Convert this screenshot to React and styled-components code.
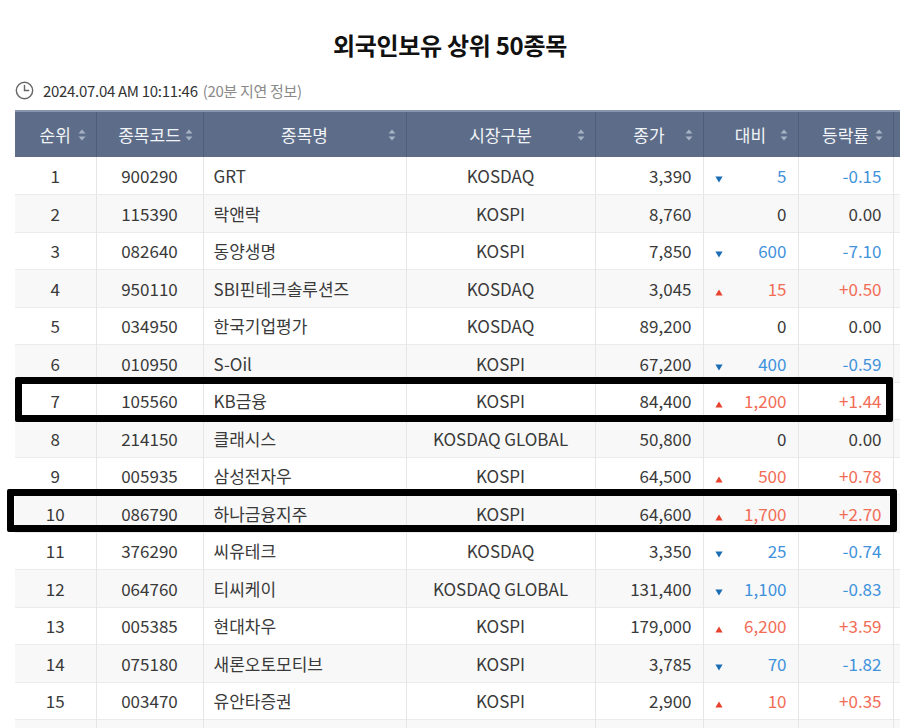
import * as React from "react"
import styled, { createGlobalStyle } from "styled-components"

const GlobalStyle = createGlobalStyle`
  html, body {
    margin: 0;
    padding: 0;
    background: #fff;
  }
  body {
    font-family: "Noto Sans CJK KR", "Noto Sans", sans-serif;
    color: #333;
  }
`

const columns = [
  { label: "순위", width: 81 },
  { label: "종목코드", width: 107 },
  { label: "종목명", width: 203 },
  { label: "시장구분", width: 189 },
  { label: "종가", width: 108 },
  { label: "대비", width: 95 },
  { label: "등락률", width: 95 },
  { label: "", width: 100, blank: true },
]

const rows = [
  [1, "900290", "GRT", "KOSDAQ", "3,390", "down", "5", "-0.15"],
  [2, "115390", "락앤락", "KOSPI", "8,760", null, "0", "0.00"],
  [3, "082640", "동양생명", "KOSPI", "7,850", "down", "600", "-7.10"],
  [4, "950110", "SBI핀테크솔루션즈", "KOSDAQ", "3,045", "up", "15", "+0.50"],
  [5, "034950", "한국기업평가", "KOSDAQ", "89,200", null, "0", "0.00"],
  [6, "010950", "S-Oil", "KOSPI", "67,200", "down", "400", "-0.59"],
  [7, "105560", "KB금융", "KOSPI", "84,400", "up", "1,200", "+1.44"],
  [8, "214150", "클래시스", "KOSDAQ GLOBAL", "50,800", null, "0", "0.00"],
  [9, "005935", "삼성전자우", "KOSPI", "64,500", "up", "500", "+0.78"],
  [10, "086790", "하나금융지주", "KOSPI", "64,600", "up", "1,700", "+2.70"],
  [11, "376290", "씨유테크", "KOSDAQ", "3,350", "down", "25", "-0.74"],
  [12, "064760", "티씨케이", "KOSDAQ GLOBAL", "131,400", "down", "1,100", "-0.83"],
  [13, "005385", "현대차우", "KOSPI", "179,000", "up", "6,200", "+3.59"],
  [14, "075180", "새론오토모티브", "KOSPI", "3,785", "down", "70", "-1.82"],
  [15, "003470", "유안타증권", "KOSPI", "2,900", "up", "10", "+0.35"],
]

// rows picked out with a thick marker in the picture
const marks = [
  { top: 377, left: 15, width: 878, height: 45 },
  { top: 489, left: 7, width: 890, height: 43 },
]

const Page = styled.div`
  position: relative;
  width: 900px;
  height: 728px;
  overflow: hidden;
`

const Title = styled.h1`
  margin: 0;
  padding-top: 28px;
  line-height: 34px;
  font-size: 24px;
  font-weight: 700;
  color: #111;
  text-align: center;
  letter-spacing: -0.3px;
`

const Meta = styled.div`
  display: flex;
  align-items: center;
  gap: 9px;
  margin-top: 18px;
  padding-left: 15px;
  height: 20px;
  font-size: 15px;
  letter-spacing: -0.3px;
  color: #333;
`

const Delay = styled.span`
  color: #8a8a8a;
  margin-left: -4px;
`

const TableWrap = styled.div`
  margin: 10px 0 0 15px;
  width: 885px;
  overflow: hidden;
`

const Table = styled.table`
  table-layout: fixed;
  border-collapse: collapse;
  width: 978px;
  font-size: 17px;
`

const HeadRow = styled.tr`
  height: 46px;
  background: #5d6d89;
  border-top: 2px solid #8796ae;
`

const Th = styled.th`
  position: relative;
  padding: 0;
  font-weight: 400;
  color: #f2f4f8;
  text-align: center;
  border-left: 1px solid #4f5e79;
  &:first-child {
    border-left: 0;
  }
`

const SortIcon = styled.svg`
  position: absolute;
  right: 10px;
  top: 50%;
  margin-top: -6px;
`

const Row = styled.tr`
  height: 37.5px;
  background: ${(p) => (p.$even ? "#f8f8f8" : "#fff")};
  border-bottom: 1px solid #ebebeb;
`

const Td = styled.td`
  padding: 0 ${(p) => (p.$align === "right" ? "11px" : p.$align === "left" ? "10px" : "0")};
  text-align: ${(p) => p.$align || "center"};
  color: ${(p) => (p.$tone === "up" ? "#f26c56" : p.$tone === "down" ? "#3f92dc" : "#3a3a3a")};
  border-left: 1px solid #e6e6e6;
  white-space: nowrap;
  line-height: 1;
  &:first-child {
    border-left: 0;
  }
`

const Change = styled.div`
  display: flex;
  align-items: center;
  justify-content: space-between;
`

const Mark = styled.div`
  position: absolute;
  box-sizing: border-box;
  border: 7px solid #000;
  border-radius: 2px;
  pointer-events: none;
`

const Clock = () => (
  <svg width="19" height="19" viewBox="0 0 20 20" fill="none" stroke="#666" strokeWidth="1.5">
    <circle cx="10" cy="10" r="8.6" />
    <path d="M10 4.6V10h4.4" strokeLinecap="round" />
  </svg>
)

const Sort = () => (
  <SortIcon width="8" height="12" viewBox="0 0 8 12">
    <path d="M4 0.5L7.5 4.6H0.5Z" fill="#a7b2c5" />
    <path d="M4 11.5L7.5 7.4H0.5Z" fill="#a7b2c5" />
  </SortIcon>
)

const Arrow = ({ dir }) =>
  dir === "up" ? (
    <svg width="8" height="7" viewBox="0 0 8 7">
      <path d="M4 0.5L7.6 6.5H0.4Z" fill="#e8412e" />
    </svg>
  ) : (
    <svg width="8" height="7" viewBox="0 0 8 7">
      <path d="M4 6.5L7.6 0.5H0.4Z" fill="#1a6db5" />
    </svg>
  )

const App = () => (
  <Page>
    <GlobalStyle />
    <Title>외국인보유 상위 50종목</Title>
    <Meta>
      <Clock />
      <span>2024.07.04 AM 10:11:46</span>
      <Delay>(20분 지연 정보)</Delay>
    </Meta>
    <TableWrap>
      <Table>
        <colgroup>
          {columns.map((c, i) => (
            <col key={i} style={{ width: c.width }} />
          ))}
        </colgroup>
        <thead>
          <HeadRow>
            {columns.map((c, i) => (
              <Th key={i}>
                {c.label}
                {!c.blank && <Sort />}
              </Th>
            ))}
          </HeadRow>
        </thead>
        <tbody>
          {rows.map(([rank, code, name, market, price, dir, diff, rate]) => (
            <Row key={rank} $even={rank % 2 === 0}>
              <Td>{rank}</Td>
              <Td>{code}</Td>
              <Td $align="left">{name}</Td>
              <Td>{market}</Td>
              <Td $align="right">{price}</Td>
              <Td $align="right" $tone={dir}>
                <Change>
                  <span>{dir && <Arrow dir={dir} />}</span>
                  <span>{diff}</span>
                </Change>
              </Td>
              <Td $align="right" $tone={dir}>{rate}</Td>
              <Td />
            </Row>
          ))}
          <Row $even>
            {columns.map((c, i) => (
              <Td key={i} />
            ))}
          </Row>
        </tbody>
      </Table>
    </TableWrap>
    {marks.map((m, i) => (
      <Mark key={i} style={m} />
    ))}
  </Page>
)

export default App
